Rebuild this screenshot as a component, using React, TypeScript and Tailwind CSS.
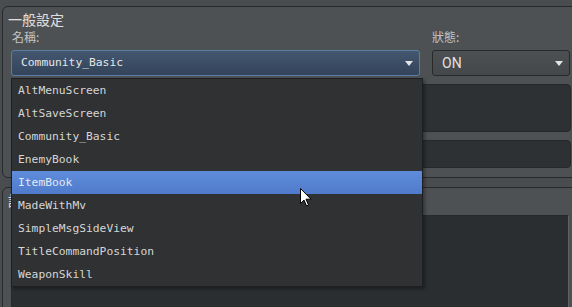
const ITEMS = [
  'AltMenuScreen',
  'AltSaveScreen',
  'Community_Basic',
  'EnemyBook',
  'ItemBook',
  'MadeWithMv',
  'SimpleMsgSideView',
  'TitleCommandPosition',
  'WeaponSkill',
];

const SELECTED = 'ItemBook';

function Arrow() {
  return (
    <svg width="8" height="5" viewBox="0 0 8 5" className="shrink-0">
      <path d="M0 0 H8 L4 5 Z" fill="#e4e4e4" />
    </svg>
  );
}

export default function App() {
  return (
    <div className="relative w-[572px] h-[307px] overflow-hidden bg-[#4a4d4f] font-['DejaVu_Sans','Noto_Sans_CJK_TC',sans-serif] text-[#d8d8d8]">
      <div className="pt-[6px]">
        {/* 一般設定 */}
        <div className="ml-[2px] w-[590px] h-[172px] rounded-[6px] border border-[#27292b] bg-[#4e5153]">
          <div className="pl-[5px] pt-[4px] text-[14px] leading-[17px] text-[#e0e0e0] font-['Noto_Sans_CJK_TC',sans-serif]">
            一般設定
          </div>
          <div className="flex pl-[8px] mt-[1px]">
            <div className="w-[421px]">
              <div className="pl-[1px] text-[12px] leading-[16px] text-[#c4c4c4] font-['Noto_Sans_CJK_TC',sans-serif]">名稱:</div>
              <div className="mt-[5px] h-[26px] w-[409px] flex items-center justify-between pl-[9px] pr-[6px] pt-[1px] rounded-[3px] border border-[#5b7ea6] bg-linear-to-b from-[#43576f] to-[#33445a] font-['DejaVu_Sans_Mono',monospace] text-[11.3px] text-[#e6e6e6]">
                <span>Community_Basic</span>
                <Arrow />
              </div>
            </div>
            <div className="w-[138px]">
              <div className="text-[12px] leading-[16px] text-[#c4c4c4] font-['Noto_Sans_CJK_TC',sans-serif]">狀態:</div>
              <div className="mt-[5px] h-[26px] w-[138px] flex items-center justify-between pl-[9px] pr-[6px] pt-[1px] rounded-[3px] border border-[#27292b] bg-linear-to-b from-[#4d5052] to-[#45484a] font-['Roboto',sans-serif] text-[14px] text-[#e0e0e0]">
                <span>ON</span>
                <Arrow />
              </div>
            </div>
          </div>
          <div className="ml-[8px] mt-[8px] h-[48px] rounded-[4px] border border-[#26282a] bg-[#2e3133] w-[560px]" />
          <div className="ml-[8px] mt-[8px] h-[28px] rounded-[4px] border border-[#26282a] bg-[#2e3133] w-[560px]" />
        </div>

        {/* 說明 */}
        <div className="ml-[2px] mt-[9px] w-[590px] h-[140px] rounded-[6px] border border-[#27292b] bg-[#4e5153]">
          <div className="ml-[5px] mt-[4px] w-[6px] overflow-hidden whitespace-nowrap text-[14px] leading-[17px] text-[#e0e0e0] font-['Noto_Sans_CJK_TC',sans-serif]">
            說明
          </div>
          <div className="ml-[8px] mt-[6px] h-[100px] w-[558px] border border-t-[#27292b] border-l-[#27292b] border-r-[#5f6264] border-b-[#5f6264] bg-[#2b2e30]" />
        </div>
      </div>

      {/* dropdown list */}
      <div className="absolute left-[11px] top-[78px] w-[412px] h-[209px] border border-[#1d1f21] bg-[#2f3133] shadow-[2px_2px_3px_rgba(0,0,0,0.35)] font-['DejaVu_Sans_Mono',monospace] text-[11.3px]">
        {ITEMS.map((item) => (
          <div
            key={item}
            className={
              item === SELECTED
                ? 'h-[23px] flex items-center pl-[6px] pt-[2px] bg-linear-to-b from-[#5f8cdb] to-[#4f7bca] text-[#e2e9f6]'
                : 'h-[23px] flex items-center pl-[6px] pt-[2px] text-[#d6d6d6]'
            }
          >
            {item}
          </div>
        ))}
      </div>

      {/* mouse cursor */}
      <svg className="absolute left-[300px] top-[188px]" width="12" height="19" viewBox="0 0 12 19">
        <path d="M0.5 0.5 V15.5 L4 12 L6.5 18 L8.5 17 L6 11.2 H11 Z" fill="#ffffff" stroke="#000000" strokeWidth="1" strokeLinejoin="round" />
      </svg>
    </div>
  );
}
